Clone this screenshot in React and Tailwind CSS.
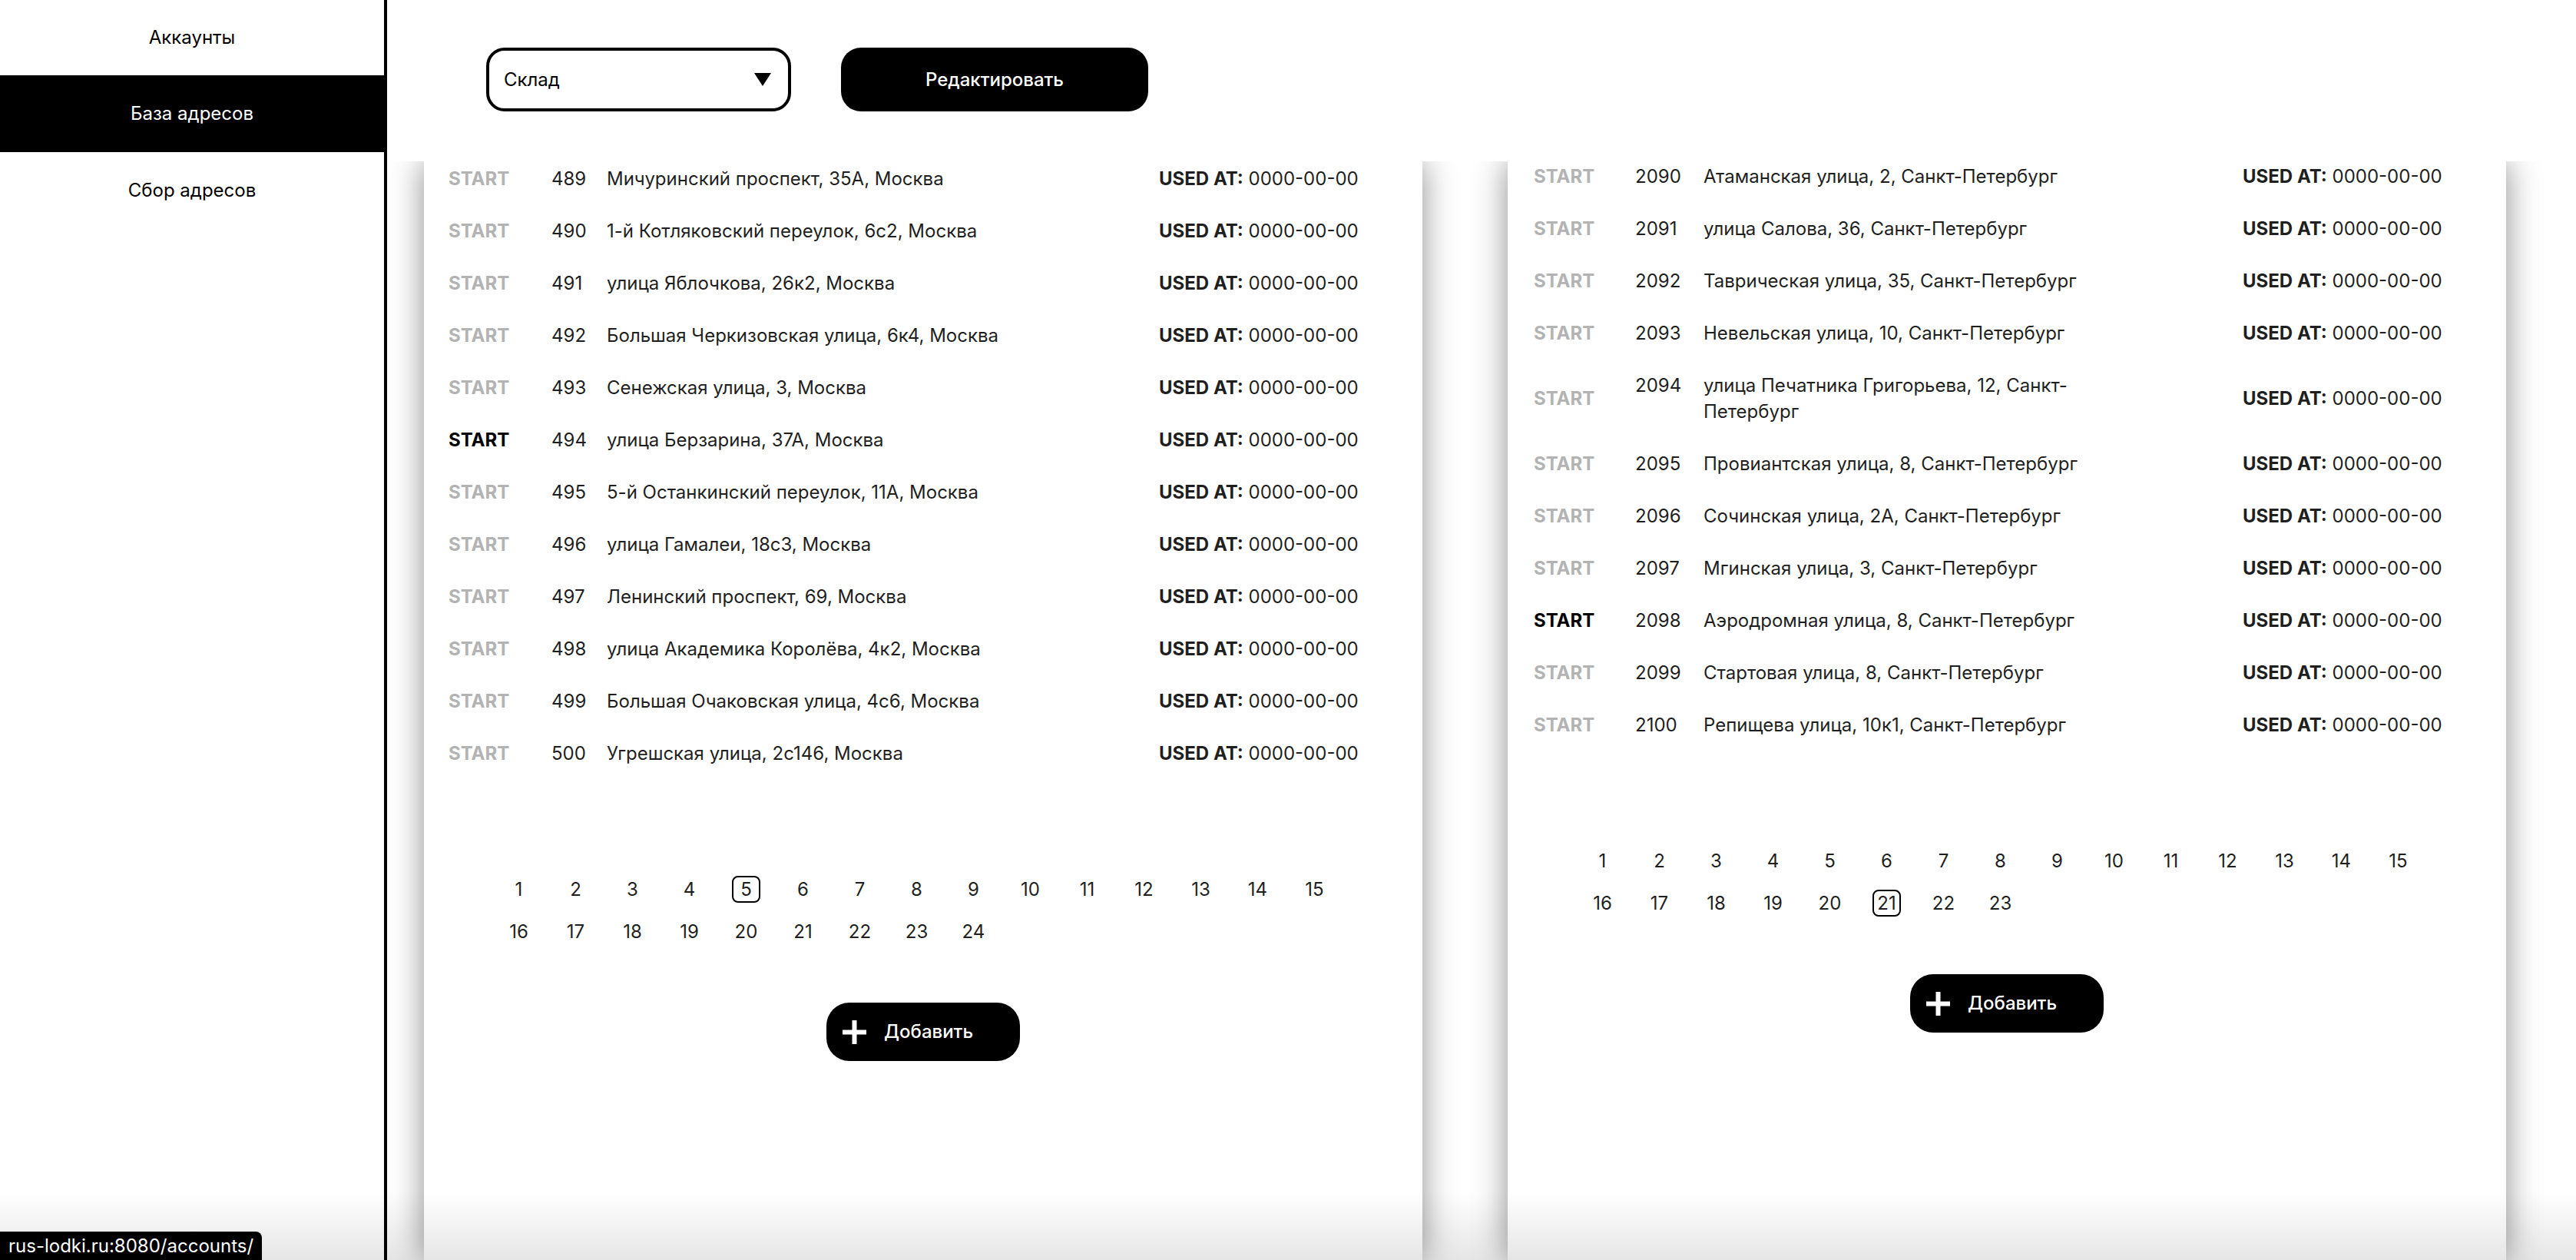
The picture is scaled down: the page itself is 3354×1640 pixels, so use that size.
import React from "react";

const moscow = [
    { id: 489, address: "Мичуринский проспект, 35А, Москва" },
    { id: 490, address: "1-й Котляковский переулок, 6с2, Москва" },
    { id: 491, address: "улица Яблочкова, 26к2, Москва" },
    { id: 492, address: "Большая Черкизовская улица, 6к4, Москва" },
    { id: 493, address: "Сенежская улица, 3, Москва" },
    { id: 494, address: "улица Берзарина, 37А, Москва", active: true },
    { id: 495, address: "5-й Останкинский переулок, 11А, Москва" },
    { id: 496, address: "улица Гамалеи, 18с3, Москва" },
    { id: 497, address: "Ленинский проспект, 69, Москва" },
    { id: 498, address: "улица Академика Королёва, 4к2, Москва" },
    { id: 499, address: "Большая Очаковская улица, 4с6, Москва" },
    { id: 500, address: "Угрешская улица, 2с146, Москва" },
];

const spb = [
    { id: 2090, address: "Атаманская улица, 2, Санкт-Петербург" },
    { id: 2091, address: "улица Салова, 36, Санкт-Петербург" },
    { id: 2092, address: "Таврическая улица, 35, Санкт-Петербург" },
    { id: 2093, address: "Невельская улица, 10, Санкт-Петербург" },
    { id: 2094, address: "улица Печатника Григорьева, 12, Санкт-Петербург" },
    { id: 2095, address: "Провиантская улица, 8, Санкт-Петербург" },
    { id: 2096, address: "Сочинская улица, 2А, Санкт-Петербург" },
    { id: 2097, address: "Мгинская улица, 3, Санкт-Петербург" },
    { id: 2098, address: "Аэродромная улица, 8, Санкт-Петербург", active: true },
    { id: 2099, address: "Стартовая улица, 8, Санкт-Петербург" },
    { id: 2100, address: "Репищева улица, 10к1, Санкт-Петербург" },
];

function PlusIcon() {
    return (
        <svg width="31" height="31" viewBox="0 0 31 31" className="shrink-0">
            <rect x="12.5" y="0" width="6" height="31" fill="white" />
            <rect x="0" y="12.5" width="31" height="6" fill="white" />
        </svg>
    );
}

function Pagination({ pages, current }) {
    return (
        <div className="w-[1090px] mx-auto flex flex-wrap gap-x-[37px] gap-y-[20px]">
            {Array.from({ length: pages }, (_, i) => i + 1).map((n) => (
                <div
                    key={n}
                    className={
                        n === current
                            ? "w-[37px] h-[35px] flex items-center justify-center border-2 border-black rounded-[8px] text-[24px] text-[#1f1f1f]"
                            : "w-[37px] h-[35px] flex items-center justify-center text-[24px] text-[#1f1f1f]"
                    }
                >
                    {n}
                </div>
            ))}
        </div>
    );
}

function AddressPanel({ rows, shift, pad, startW, numW, pages, current }) {
    return (
        <div className="w-[1300px] shrink-0 bg-white shadow-[0_0_40px_rgba(0,0,0,0.45)] overflow-hidden">
            <div className={shift}>
                {rows.map((row) => (
                    <div key={row.id} className={`flex items-center py-[17px] pr-[86px] leading-[34px] text-[24px] ${pad}`}>
                        <div className={`${startW} shrink-0 font-bold ${row.active ? "text-black" : "text-[#b3b3b3]"}`}>START</div>
                        <div className="flex-1 flex items-start text-[#1f1f1f]">
                            <span className={`${numW} shrink-0`}>{row.id}</span>
                            <span className="w-[520px]">{row.address}</span>
                        </div>
                        <div className="w-[257px] shrink-0 whitespace-nowrap text-[#1f1f1f]">
                            <span className="font-bold">USED AT:</span> 0000-00-00
                        </div>
                    </div>
                ))}
            </div>
            <div className="mt-[125px]">
                <Pagination pages={pages} current={current} />
            </div>
            <div className="mt-[75px] flex justify-center">
                <button className="w-[252px] h-[76px] rounded-[30px] bg-black text-white flex items-center gap-[23px] pl-[21px] text-[24px] font-medium">
                    <PlusIcon />
                    Добавить
                </button>
            </div>
        </div>
    );
}

export default function App() {
    return (
        <div className="relative flex h-screen overflow-hidden bg-white font-['Inter','Noto_Sans',sans-serif] text-black">
            <aside className="w-[504px] shrink-0 border-r-4 border-black">
                <div className="h-[98px] flex items-center justify-center text-[24px]">Аккаунты</div>
                <div className="h-[100px] flex items-center justify-center text-[24px] bg-black text-white">База адресов</div>
                <div className="h-[100px] flex items-center justify-center text-[24px]">Сбор адресов</div>
            </aside>

            <main className="flex-1 min-w-0 flex flex-col">
                <header className="relative z-10 h-[210px] shrink-0 bg-white flex items-start pt-[62px] pl-[129px] gap-[65px]">
                    <div className="w-[397px] h-[83px] border-4 border-black rounded-[24px] flex items-center justify-between pl-[19px] pr-[22px] text-[24px]">
                        <span>Склад</span>
                        <svg width="22" height="17" viewBox="0 0 22 17">
                            <polygon points="0,0 22,0 11,17" fill="black" />
                        </svg>
                    </div>
                    <button className="w-[400px] h-[83px] rounded-[26px] bg-black text-white text-[24px] font-medium">
                        Редактировать
                    </button>
                </header>

                <div className="flex-1 min-h-0 flex gap-[111px] pl-[48px]">
                    <AddressPanel rows={moscow} shift="-mt-[11px]" pad="pl-[32px]" startW="w-[134px]" numW="w-[72px]" pages={24} current={5} />
                    <AddressPanel rows={spb} shift="-mt-[14px]" pad="pl-[34px]" startW="w-[132px]" numW="w-[89px]" pages={23} current={21} />
                </div>
            </main>

            <div className="pointer-events-none absolute inset-x-0 bottom-0 h-[90px] bg-linear-to-b from-transparent to-black/10" />
            <div className="absolute left-0 bottom-0 w-[341px] h-[37px] pl-[11px] flex items-center bg-black text-white text-[24px] rounded-tr-[8px] whitespace-nowrap">
                rus-lodki.ru:8080/accounts/
            </div>
        </div>
    );
}
